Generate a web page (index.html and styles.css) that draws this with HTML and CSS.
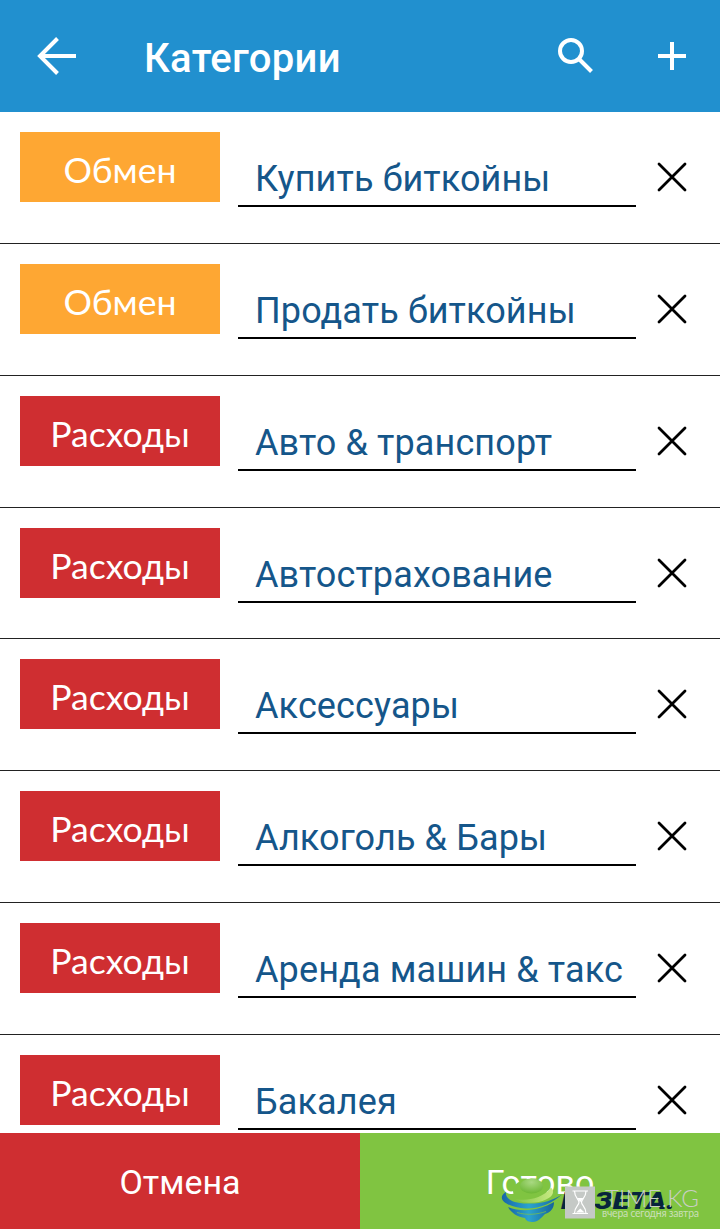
FILE: index.html
```html
<!DOCTYPE html>
<html lang="ru">
<head>
<meta charset="utf-8">
<title>Категории</title>
<link rel="stylesheet" href="styles.css">
</head>
<body>
<div class="screen">
  <header class="topbar">
    <svg class="back" viewBox="0 0 40 40"><path d="M20.500 2.500 3 20l17.500 17.500M3 20h36"/></svg>
    <h1 class="title">Категории</h1>
    <svg class="search" viewBox="0 0 36 36"><circle cx="13" cy="13" r="11"/><path d="M21.500 21.500 33.500 33.500"/></svg>
    <svg class="plus" viewBox="0 0 28 28"><path d="M14 0v28M0 14h28"/></svg>
  </header>
  <main class="list">
    <div class="row"><span class="badge exchange">Обмен</span><span class="field">Купить биткойны</span><svg class="close" viewBox="0 0 30 30"><path d="m2 2 26 26M28 2 2 28"/></svg></div>
    <div class="row"><span class="badge exchange">Обмен</span><span class="field">Продать биткойны</span><svg class="close" viewBox="0 0 30 30"><path d="m2 2 26 26M28 2 2 28"/></svg></div>
    <div class="row"><span class="badge expense">Расходы</span><span class="field">Авто &amp; транспорт</span><svg class="close" viewBox="0 0 30 30"><path d="m2 2 26 26M28 2 2 28"/></svg></div>
    <div class="row short"><span class="badge expense">Расходы</span><span class="field">Автострахование</span><svg class="close" viewBox="0 0 30 30"><path d="m2 2 26 26M28 2 2 28"/></svg></div>
    <div class="row"><span class="badge expense">Расходы</span><span class="field">Аксессуары</span><svg class="close" viewBox="0 0 30 30"><path d="m2 2 26 26M28 2 2 28"/></svg></div>
    <div class="row"><span class="badge expense">Расходы</span><span class="field">Алкоголь &amp; Бары</span><svg class="close" viewBox="0 0 30 30"><path d="m2 2 26 26M28 2 2 28"/></svg></div>
    <div class="row"><span class="badge expense">Расходы</span><span class="field">Аренда машин &amp; такс</span><svg class="close" viewBox="0 0 30 30"><path d="m2 2 26 26M28 2 2 28"/></svg></div>
    <div class="row"><span class="badge expense">Расходы</span><span class="field">Бакалея</span><svg class="close" viewBox="0 0 30 30"><path d="m2 2 26 26M28 2 2 28"/></svg></div>
  </main>
  <footer class="actions">
    <button class="action cancel">Отмена</button>
    <button class="action done">Готово</button>
    <svg class="stamp" viewBox="0 0 240 60">
      <defs>
        <linearGradient id="swoosh" x1="0" y1="0" x2="1" y2="0"><stop offset="0" stop-color="#1766a8"/><stop offset=".45" stop-color="#2ba3cf"/><stop offset="1" stop-color="#16639c"/></linearGradient>
        <linearGradient id="lime" x1="0" y1="0" x2="1" y2="0"><stop offset="0" stop-color="#7fc343"/><stop offset="1" stop-color="#c9ea83"/></linearGradient>
        <radialGradient id="globe" cx=".5" cy=".25" r=".8"><stop offset="0" stop-color="#a9d982"/><stop offset="1" stop-color="#69b52f"/></radialGradient>
      </defs>
      <ellipse cx="50" cy="22" rx="17" ry="12" fill="#80c441"/>
      <ellipse cx="51.500" cy="17" rx="11.500" ry="7.500" fill="url(#globe)"/>
      <path d="M34 29.500c10 3 28 1 37-11 4 4 2 9-5 12-10 5-25 4-32-1Z" fill="url(#lime)"/>
      <path d="M26 23c-1 6 5 11 21 11.500 14 .5 26-3 35-9-10 9-23 14.500-36 14-19-1-31-10-20-16.500Z" fill="url(#swoosh)"/>
      <path d="M28 38c15 6 32 3 46-5 0 6-3 10-9 12-4 4-7 8-12 8-4 0-7-1-8-4-7-1-14-5-17-11Z" fill="url(#swoosh)"/>
      <path d="M37 43.500c10 3 20 2 29-1" fill="none" stroke="#80c441" stroke-width=".7"/>
      <text class="paper" x="81" y="40" textLength="114" lengthAdjust="spacingAndGlyphs">ГАЗЕТА.</text>
      <rect x="85" y="17.500" width="30" height="32" fill="#c5c9c6"/>
      <path d="M92.500 22h15.500M92.500 44.500h15.500M94.500 22c0 7 4.500 8 4.500 11.200s-4.500 4.200-4.500 11.200M106 22c0 7-4.500 8-4.500 11.200s4.500 4.200 4.500 11.200" fill="none" stroke="#fff" stroke-width="1.200"/>
      <path d="m97 29h6.500l-3.200 4ZM96 43.500l4.300-4 4.300 4Z" fill="#fff"/>
      <text class="time" x="125" y="38" textLength="94">TIME.KG</text>
      <text class="tagline" x="122" y="48" textLength="97">вчера сегодня завтра</text>
    </svg>
  </footer>
</div>
</body>
</html>
```
FILE: styles.css
```css
* { box-sizing: border-box; }
body { margin: 0; background: #fff; font-family: Roboto, sans-serif; }
.screen { width: 720px; height: 1229px; display: flex; flex-direction: column; overflow: hidden; }
svg { display: block; flex: none; }
.topbar { flex: none; height: 112px; display: flex; align-items: center; padding: 0 34px 0 37px; background: #2190cf; color: #fff; }
.topbar svg { fill: none; stroke: #fff; stroke-width: 4; }
.back { width: 40px; height: 40px; }
.title { flex: 1; margin: 5px 0 0 67px; font-size: 40px; font-weight: 500; line-height: 48px; letter-spacing: .3px; white-space: nowrap; }
.search { width: 36px; height: 36px; margin-right: 64px; }
.plus { width: 28px; height: 28px; }
.list { flex: 1; min-height: 0; overflow: hidden; }
.row { height: 132px; display: flex; align-items: flex-start; padding: 20px 33px 0 20px; border-bottom: 1px solid #222; }
.short { height: 131px; }
.badge { width: 200px; height: 70px; flex: none; color: #fff; font-family: Lato, sans-serif; font-size: 35.600px; line-height: 75px; text-align: center; }
.exchange { background: #fea733; }
.expense { background: #cf2e31; }
.field { width: 398px; height: 75px; flex: none; margin-left: 18px; padding-left: 17px; border-bottom: 2px solid #000; color: #15568a; font-size: 36px; line-height: 94px; letter-spacing: .12px; white-space: nowrap; }
.close { width: 30px; height: 30px; margin: 30px 0 0 21px; fill: none; stroke: #000; stroke-width: 2.800; stroke-linecap: round; }
.actions { position: relative; flex: none; height: 96px; display: flex; }
.action { flex: 1; border: 0; padding: 2px 0 0; color: #fff; font: 34px Roboto, sans-serif; letter-spacing: 0; }
.cancel { background: #cf2e31; }
.done { background: #80c441; }
.stamp { position: absolute; right: 0; bottom: 0; width: 240px; height: 60px; }
.paper { fill: #07243c; font: italic 900 23px Roboto, sans-serif; }
.time { fill: #c9cfc5; font: 300 24px Lato, sans-serif; }
.tagline { fill: #c9dfb8; font: 10.500px Lato, sans-serif; }
```
